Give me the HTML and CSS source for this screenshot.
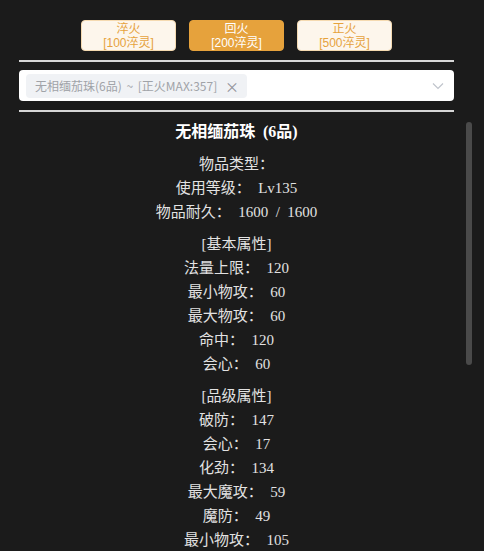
FILE: index.html
```html
<!DOCTYPE html>
<html lang="zh">
<head>
<meta charset="utf-8">
<title>物品</title>
<link rel="stylesheet" href="styles.css">
</head>
<body>
<div class="page">
  <div class="btn-row">
    <button class="btn">淬火<br>[100淬灵]</button>
    <button class="btn active">回火<br>[200淬灵]</button>
    <button class="btn">正火<br>[500淬灵]</button>
  </div>
  <div class="select-wrap">
    <div class="select">
      <span class="tag">无相缅茄珠(6品) ~ [正火MAX:357]<span class="tag-close">×</span></span>
      <svg class="chevron" width="12" height="8" viewBox="0 0 12 8"><path d="M1 1.5 L6 6.5 L11 1.5" fill="none" stroke="#c0c4cc" stroke-width="1.2"/></svg>
    </div>
  </div>
  <div class="panel">
    <div class="scroller">
      <div class="detail">
        <div class="title">无相缅茄珠 (6品)</div>
        <div class="group">
          <div class="line">物品类型：</div>
          <div class="line">使用等级： Lv135</div>
          <div class="line">物品耐久： 1600 / 1600</div>
        </div>
        <div class="group">
          <div class="line">[基本属性]</div>
          <div class="line">法量上限： 120</div>
          <div class="line">最小物攻： 60</div>
          <div class="line">最大物攻： 60</div>
          <div class="line">命中： 120</div>
          <div class="line">会心： 60</div>
        </div>
        <div class="group">
          <div class="line">[品级属性]</div>
          <div class="line">破防： 147</div>
          <div class="line">会心： 17</div>
          <div class="line">化劲： 134</div>
          <div class="line">最大魔攻： 59</div>
          <div class="line">魔防： 49</div>
          <div class="line">最小物攻： 105</div>
        </div>
      </div>
    </div>
    <div class="track"><div class="thumb"></div></div>
  </div>
</div>
</body>
</html>
```

FILE: styles.css
```css
html, body {
  margin: 0;
  padding: 0;
  background: #1b1b1b;
  height: 100%;
  overflow: hidden;
}
body {
  font-family: "Liberation Serif", "Noto Sans CJK SC", serif;
  color: #e2e2e2;
}
.page {
  padding-top: 20px;
}
.btn-row {
  display: flex;
  justify-content: center;
  gap: 13px;
  padding-right: 11px;
}
.btn {
  width: 95px;
  height: 31px;
  padding: 0;
  margin: 0;
  border: 1px solid #f5dab1;
  border-radius: 4px;
  background: #fdf6ec;
  color: #e6a23c;
  font-family: "Liberation Sans", "Noto Sans CJK SC", sans-serif;
  font-size: 12px;
  line-height: 14px;
}
.btn.active {
  background: #e6a23c;
  border-color: #e6a23c;
  color: #fff;
}
.select-wrap {
  margin: 9px 30px 0 19px;
  border-top: 2px solid #d6d6d6;
  border-bottom: 2px solid #d6d6d6;
  padding: 8px 0 9px;
}
.select {
  height: 31px;
  background: #fff;
  border-radius: 4px;
  display: flex;
  align-items: center;
  padding: 0 10px 0 7px;
  box-sizing: border-box;
}
.tag {
  height: 24px;
  box-sizing: border-box;
  display: inline-flex;
  align-items: center;
  background: #f0f2f5;
  border-radius: 4px;
  color: #a0a3a8;
  font-family: "Noto Sans CJK SC", sans-serif;
  font-size: 12px;
  padding: 0 8px 0 9px;
  width: 221px;
  white-space: nowrap;
  word-spacing: 2px;
}
.tag-close {
  margin-left: auto;
  font-size: 14px;
  color: #909399;
}
.chevron {
  margin-left: auto;
}
.panel {
  display: flex;
  margin: 8px 0 0 19px;
  height: 431px;
}
.scroller {
  width: 435px;
  overflow: hidden;
}
.track {
  width: 6px;
  margin-left: 12px;
  padding-top: 2px;
}
.thumb {
  height: 243px;
  background: #4a4a4a;
  border-radius: 3px;
}
.detail {
  text-align: center;
  font-size: 15px;
  line-height: 24px;
  word-spacing: 3.75px;
}
.title {
  color: #fff;
  font-size: 16px;
  font-weight: bold;
  margin-bottom: 8px;
}
.group {
  margin-bottom: 8px;
}
```
